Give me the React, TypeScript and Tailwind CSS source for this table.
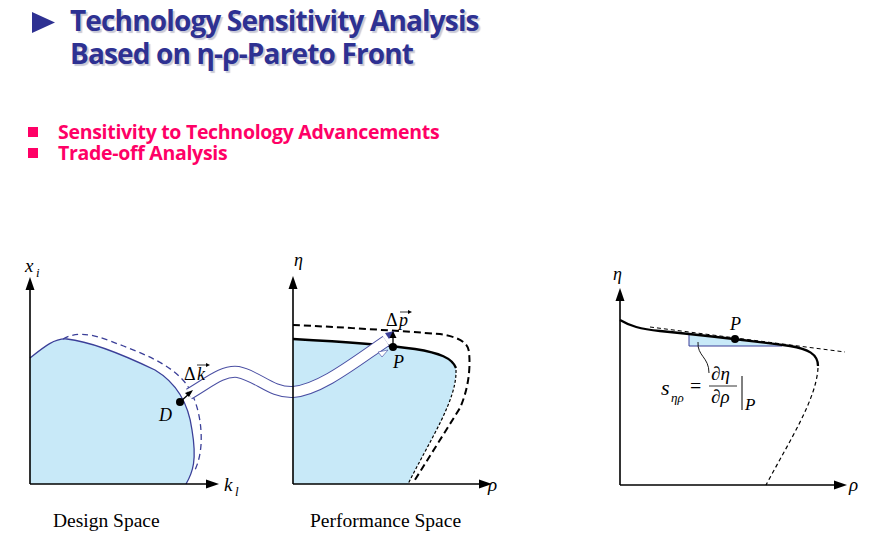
import React from "react";

const serif = { fontFamily: '"Liberation Serif", "Times New Roman", serif' };
const sans = { fontFamily: '"Open Sans", Lato, sans-serif' };

const tube = "M189,394 C207,384 222,370 238,372 C258,376 271,393 293,392 C320,390 355,362 386,341";

const LeftFigures = () => (
  <svg width={520} height={300} viewBox="0 240 520 300" style={serif}>
    {/* design space region */}
    <path
      d="M30,358 C45,346 55,338 67,339 C95,342 130,358 155,370 C175,382 188,400 192,430 C197,460 193,472 186,484 L30,484 Z"
      fill="#c8e9f8"
    />
    <path
      d="M30,358 C45,346 55,338 67,339 C95,342 130,358 155,370 C175,382 188,400 192,430 C197,460 193,472 186,484"
      fill="none"
      stroke="#3b3f98"
      strokeWidth={1.3}
    />
    <path
      d="M63,339 C75,332 90,333 110,341 C140,352 172,364 187,385 C200,405 202,430 201,445 C200,458 197,466 194,472"
      fill="none"
      stroke="#3b3f98"
      strokeWidth={1.3}
      strokeDasharray="6 4"
    />

    {/* performance space region */}
    <path
      d="M293,339 C330,341 380,344 415,349 C440,353 452,358 456,368 C457,400 430,440 408,484 L293,484 Z"
      fill="#c8e9f8"
    />
    <path
      d="M293,339 C330,341 380,344 415,349 C440,353 452,358 456,368"
      fill="none"
      stroke="#000"
      strokeWidth={2.3}
    />
    <path
      d="M456,370 C457,400 430,440 408,484"
      fill="none"
      stroke="#000"
      strokeWidth={1.2}
      strokeDasharray="3 2"
    />
    <path
      d="M293,325 C340,327 400,331 440,334 C458,337 468,342 469,352 C471,372 467,392 460,408 L413,483"
      fill="none"
      stroke="#000"
      strokeWidth={2}
      strokeDasharray="7 4"
    />

    {/* tube linking D and P */}
    <path d={tube} fill="none" stroke="#4a4fa3" strokeWidth={12} />
    <path d={tube} fill="none" stroke="#fff" strokeWidth={10} />
    <polygon points="395,331 385,333 389,339" fill="#3b3f98" />
    <polygon points="388,350 378,352 382,357" fill="#fff" stroke="#3b3f98" strokeWidth={0.6} />

    {/* axes */}
    <g stroke="#000" strokeWidth={1.6} fill="none">
      <path d="M30,484 V285" />
      <path d="M30,484 H210" />
      <path d="M293,484 V284" />
      <path d="M293,484 H483" />
    </g>
    <g fill="#000">
      <polygon points="30,277 25.5,290 34.5,290" />
      <polygon points="219,484 206,479.5 206,488.5" />
      <polygon points="293,276 288.5,289 297.5,289" />
      <polygon points="492,484 479,479.5 479,488.5" />
    </g>

    {/* D point */}
    <circle cx={180} cy={402} r={4} fill="#000" />
    <path d="M180,402 L190,393" stroke="#000" strokeWidth={1.3} />
    <polygon points="193,390 185,393 189,397" fill="#000" />

    {/* P point */}
    <circle cx={393} cy={347} r={4} fill="#000" />
    <path d="M393,347 V337" stroke="#000" strokeWidth={1.3} />
    <polygon points="393,331 389.5,338 396.5,338" fill="#000" />

    {/* labels */}
    <text x={25} y={272} fontSize={19} fontStyle="italic">x</text>
    <text x={36} y={277} fontSize={13} fontStyle="italic">i</text>
    <text x={224} y={491} fontSize={19} fontStyle="italic">k</text>
    <text x={235} y={496} fontSize={13} fontStyle="italic">l</text>
    <text x={159} y={421} fontSize={18} fontStyle="italic">D</text>
    <text x={184} y={380} fontSize={18}>Δ</text>
    <text x={197} y={380} fontSize={18} fontStyle="italic">k</text>
    <path d="M197,365 H208" stroke="#000" strokeWidth={0.8} />
    <polygon points="210,365 206,363 206,367" fill="#000" />

    <text x={294} y={266} fontSize={18} fontStyle="italic">η</text>
    <text x={488} y={491} fontSize={19} fontStyle="italic">ρ</text>
    <text x={386} y={326} fontSize={18}>Δ</text>
    <text x={399} y={326} fontSize={18} fontStyle="italic">p</text>
    <path d="M400,312 H410" stroke="#000" strokeWidth={0.8} />
    <polygon points="412,312 408,310 408,314" fill="#000" />
    <text x={393} y={368} fontSize={18} fontStyle="italic">P</text>

    <text x={53} y={527} fontSize={19.5}>Design Space</text>
    <text x={310} y={527} fontSize={19.5}>Performance Space</text>
  </svg>
);

const RightFigure = () => (
  <svg width={276} height={300} viewBox="600 240 276 300" style={serif}>
    <path d="M689,335 L689,346 L782,346 C760,343 720,338 689,335 Z" fill="#c8e9f8" />
    <path d="M689,335 V346 H782" fill="none" stroke="#3b3f98" strokeWidth={1} />
    <path d="M650,327 L845,352" fill="none" stroke="#000" strokeWidth={1} strokeDasharray="4 3" />
    <path
      d="M620,320 C630,326 640,329 660,331 C700,335 760,342 790,346 C808,349 818,354 818,366"
      fill="none"
      stroke="#000"
      strokeWidth={2.3}
    />
    <path
      d="M818,368 C816,400 790,440 766,485"
      fill="none"
      stroke="#000"
      strokeWidth={1.2}
      strokeDasharray="4 3"
    />
    <path d="M698,342 C697,356 709,357 709,373" fill="none" stroke="#000" strokeWidth={0.9} />

    <g stroke="#000" strokeWidth={1.6} fill="none">
      <path d="M620,485 V296" />
      <path d="M620,485 H838" />
    </g>
    <g fill="#000">
      <polygon points="620,288 615.5,301 624.5,301" />
      <polygon points="847,485 834,480.5 834,489.5" />
    </g>

    <circle cx={735} cy={339} r={4} fill="#000" />
    <text x={730} y={330} fontSize={18} fontStyle="italic">P</text>
    <text x={613} y={280} fontSize={18} fontStyle="italic">η</text>
    <text x={849} y={491} fontSize={19} fontStyle="italic">ρ</text>

    <text x={661} y={395} fontSize={22} fontStyle="italic">s</text>
    <text x={671} y={402} fontSize={13} fontStyle="italic">ηρ</text>
    <text x={690} y={393} fontSize={20}>=</text>
    <text x={711} y={380} fontSize={19} fontStyle="italic">∂η</text>
    <path d="M709,386 H737" stroke="#000" strokeWidth={0.8} />
    <text x={711} y={403} fontSize={19} fontStyle="italic">∂ρ</text>
    <path d="M742,376 V410" stroke="#000" strokeWidth={1} />
    <text x={745} y={410} fontSize={17} fontStyle="italic">P</text>
  </svg>
);

export default function App() {
  return (
    <div className="w-[876px] h-[544px] bg-white overflow-hidden">
      <div className="h-[120px] pt-[4px] pl-[32px] flex items-start gap-[15px]">
        <svg width={23} height={21} viewBox="0 0 23 21" className="mt-[8px] shrink-0">
          <polygon points="0,0 23,10.5 0,21" fill="#2e3192" />
        </svg>
        <h1
          className="text-[28px] leading-[33px] font-bold text-[#2e3192] tracking-[-0.85px] [text-shadow:2px_2px_1px_#c9c9d6]"
          style={sans}
        >
          Technology Sensitivity Analysis
          <br />
          Based on η-ρ-Pareto Front
        </h1>
      </div>
      <ul
        className="h-[120px] pt-[2px] pl-[28px] text-[19.5px] leading-[20.5px] font-bold text-[#ff0066] tracking-[-0.3px]"
        style={sans}
      >
        <li className="flex items-center h-[20.5px]">
          <span className="w-[10px] h-[10px] bg-[#ff0066] mr-[20px] shrink-0" />
          Sensitivity to Technology Advancements
        </li>
        <li className="flex items-center h-[20.5px]">
          <span className="w-[10px] h-[10px] bg-[#ff0066] mr-[20px] shrink-0" />
          Trade-off Analysis
        </li>
      </ul>
      <div className="flex gap-[80px]">
        <LeftFigures />
        <RightFigure />
      </div>
    </div>
  );
}
